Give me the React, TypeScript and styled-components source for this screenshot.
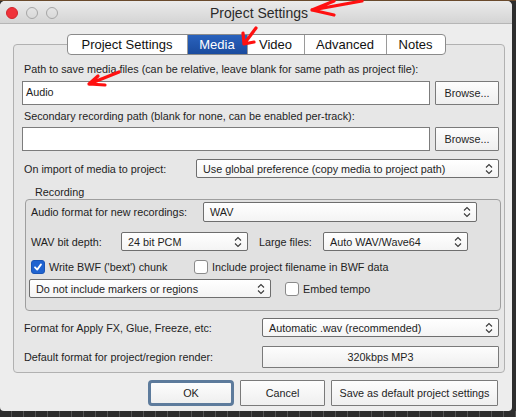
import React from "react";
import styled, { createGlobalStyle } from "styled-components";

const TEXT = "10.8px";

const Global = createGlobalStyle`
  html, body { margin: 0; padding: 0; background: #2c2c2c; }
  body { font-family: "Liberation Sans", Arial, sans-serif; color: #1e1e1e; }
  * { box-sizing: border-box; }
`;

const Desktop = styled.div`
  position: relative;
  width: 516px;
  height: 417px;
  overflow: hidden;
  padding-top: 1px;
  background:
    repeating-linear-gradient(90deg, transparent 0 11px, #555 11px 12px) 0 411px / 100% 6px no-repeat,
    linear-gradient(#6a4a2c 0 1px, #2e2e2e 1px);
`;

const Window = styled.div`
  width: 512px;
  height: 410px;
  background: #ededed;
  border-radius: 5px 5px 4px 4px;
  overflow: hidden;
  display: flex;
  flex-direction: column;
`;

const TitleBar = styled.div`
  flex: none;
  height: 23px;
  display: grid;
  grid-template-columns: 1fr auto 1fr;
  align-items: center;
  background: linear-gradient(#ebebeb, #d4d4d4);
  border-bottom: 1px solid #b6b6b6;
  padding-left: 6px;
`;

const Lights = styled.div`
  display: flex;
  gap: 8px;
  padding-top: 2px;
`;

const Light = styled.span<{ $red?: boolean }>`
  width: 12px;
  height: 12px;
  border-radius: 50%;
  background: ${(p) => (p.$red ? "#f0323a" : "transparent")};
  border: 1px solid ${(p) => (p.$red ? "#d0262d" : "#a6a6a6")};
`;

const Title = styled.div`
  font-size: 14px;
  color: #2a2a2a;
  padding-top: 1px;
`;

const Body = styled.div`
  flex: 1;
  display: flex;
  flex-direction: column;
  padding: 0 7px 0 13px;
`;

const TabsRow = styled.div`
  display: flex;
  justify-content: center;
  margin-top: 10px;
  padding-right: 6px;
  position: relative;
  z-index: 1;
`;

const TabBar = styled.div`
  display: flex;
  height: 21px;
  background: #fff;
  border: 1px solid #8b8b8b;
  border-radius: 4px;
  overflow: hidden;
`;

const Tab = styled.div<{ $active?: boolean; $w: number }>`
  width: ${(p) => p.$w}px;
  display: flex;
  align-items: center;
  justify-content: center;
  font-size: 13px;
  color: ${(p) => (p.$active ? "#fff" : "#111")};
  background: ${(p) => (p.$active ? "linear-gradient(#2a62bd, #1a4b9e)" : "transparent")};
  & + & {
    border-left: 1px solid #9a9a9a;
  }
`;

const Group = styled.div`
  margin-top: -11px;
  border: 1px solid #b1b1b1;
  border-radius: 4px;
  background: #e7e7e7;
  padding: 18px 5px 4px 8px;
  display: flex;
  flex-direction: column;
`;

const Label = styled.div<{ $mt?: number }>`
  font-size: ${TEXT};
  line-height: 13px;
  padding-left: 2px;
  margin-top: ${(p) => p.$mt ?? 0}px;
  white-space: nowrap;
`;

const PathRow = styled.div<{ $mt: number }>`
  display: flex;
  gap: 5px;
  height: 24px;
  margin-top: ${(p) => p.$mt}px;
`;

const TextBox = styled.div`
  flex: 1;
  background: #fff;
  border: 1px solid #7c7c7c;
  font-size: ${TEXT};
  padding: 4px 3px;
`;

const Button = styled.div<{ $w?: number; $focus?: boolean; $h?: number }>`
  width: ${(p) => (p.$w ? `${p.$w}px` : "auto")};
  height: ${(p) => p.$h ?? 24}px;
  flex: ${(p) => (p.$w ? "none" : "1")};
  display: flex;
  align-items: center;
  justify-content: center;
  font-size: ${TEXT};
  color: #1e1e1e;
  background: linear-gradient(#fdfdfd, #efefef);
  border: ${(p) => (p.$focus ? "3px solid #5d7b9c" : "1px solid #7a7a7a")};
  border-radius: ${(p) => (p.$focus ? "4px" : "1px")};
`;

const Row = styled.div<{ $mt?: number; $gap?: number }>`
  display: flex;
  align-items: center;
  gap: ${(p) => p.$gap ?? 0}px;
  margin-top: ${(p) => p.$mt ?? 0}px;
`;

const FieldLabel = styled.div<{ $w?: number; $pl?: number }>`
  font-size: ${TEXT};
  white-space: nowrap;
  padding-left: ${(p) => p.$pl ?? 2}px;
  width: ${(p) => (p.$w ? `${p.$w}px` : "auto")};
  flex: none;
`;

const SelectBox = styled.div<{ $w?: number; $h?: number }>`
  width: ${(p) => (p.$w ? `${p.$w}px` : "auto")};
  flex: ${(p) => (p.$w ? "none" : "1")};
  height: ${(p) => p.$h ?? 19}px;
  display: flex;
  align-items: center;
  justify-content: space-between;
  padding: 0 5px 0 6px;
  font-size: ${TEXT};
  background: linear-gradient(#ffffff, #f4f4f4);
  border: 1px solid #6e6e6e;
  border-radius: 2px;
  white-space: nowrap;
`;

const Legend = styled.div`
  font-size: ${TEXT};
  line-height: 13px;
  margin-top: 8px;
  padding-left: 13px;
`;

const RecBox = styled.div`
  margin: 0 -2px 0 3px;
  border: 1px solid #9e9e9e;
  border-radius: 4px;
  background: #e1e1e1;
  padding: 2px 23px 12px 3px;
  display: flex;
  flex-direction: column;
`;

const Check = styled.span<{ $on?: boolean }>`
  width: 14px;
  height: 14px;
  flex: none;
  border-radius: 3px;
  display: inline-flex;
  align-items: center;
  justify-content: center;
  background: ${(p) => (p.$on ? "#1f63d0" : "#fff")};
  border: 1px solid ${(p) => (p.$on ? "#1a55b5" : "#8a8a8a")};
`;

const CheckItem = styled.div<{ $w?: number; $pl?: number }>`
  display: flex;
  align-items: center;
  gap: 4px;
  font-size: ${TEXT};
  white-space: nowrap;
  padding-left: ${(p) => p.$pl ?? 0}px;
  width: ${(p) => (p.$w ? `${p.$w}px` : "auto")};
`;

const Footer = styled.div`
  display: flex;
  justify-content: flex-end;
  gap: 6px;
  margin-top: 7px;
  padding-right: 7px;
`;

const Overlay = styled.svg`
  position: absolute;
  left: 0;
  top: 0;
  z-index: 5;
  pointer-events: none;
`;

const Chevrons = () => (
  <svg width="8" height="12" viewBox="0 0 8 12" fill="none" stroke="#3a3a3a" strokeWidth="1.1">
    <path d="M1 4.5 L4 1.5 L7 4.5" />
    <path d="M1 7.5 L4 10.5 L7 7.5" />
  </svg>
);

const Tick = () => (
  <svg width="10" height="10" viewBox="0 0 10 10" fill="none" stroke="#fff" strokeWidth="1.8" strokeLinecap="round" strokeLinejoin="round">
    <path d="M2 5.3 L4.2 7.6 L8 2.4" />
  </svg>
);

const Select = ({ children, w, h }: { children: React.ReactNode; w?: number; h?: number }) => (
  <SelectBox $w={w} $h={h}>
    <span>{children}</span>
    <Chevrons />
  </SelectBox>
);

export default function App() {
  return (
    <Desktop>
      <Global />
      <Window>
        <TitleBar>
          <Lights>
            <Light $red />
            <Light />
            <Light />
          </Lights>
          <Title>Project Settings</Title>
          <span />
        </TitleBar>
        <Body>
          <TabsRow>
            <TabBar>
              <Tab $w={119}>Project Settings</Tab>
              <Tab $w={60} $active>Media</Tab>
              <Tab $w={57}>Video</Tab>
              <Tab $w={82}>Advanced</Tab>
              <Tab $w={59}>Notes</Tab>
            </TabBar>
          </TabsRow>
          <Group>
            <Label>Path to save media files (can be relative, leave blank for same path as project file):</Label>
            <PathRow $mt={5}>
              <TextBox>Audio</TextBox>
              <Button $w={64}>Browse...</Button>
            </PathRow>
            <Label $mt={5}>Secondary recording path (blank for none, can be enabled per-track):</Label>
            <PathRow $mt={4}>
              <TextBox />
              <Button $w={64}>Browse...</Button>
            </PathRow>
            <Row $mt={8}>
              <FieldLabel $w={174}>On import of media to project:</FieldLabel>
              <Select>Use global preference (copy media to project path)</Select>
            </Row>
            <Legend>Recording</Legend>
            <RecBox>
              <Row>
                <FieldLabel $w={174}>Audio format for new recordings:</FieldLabel>
                <Select h={20}>WAV</Select>
              </Row>
              <Row $mt={10}>
                <FieldLabel $w={92}>WAV bit depth:</FieldLabel>
                <Select w={127}>24 bit PCM</Select>
                <FieldLabel $w={75} $pl={11}>Large files:</FieldLabel>
                <Select w={145}>Auto WAV/Wave64</Select>
              </Row>
              <Row $mt={9}>
                <CheckItem $w={165} $pl={2}>
                  <Check $on>
                    <Tick />
                  </Check>
                  Write BWF ('bext') chunk
                </CheckItem>
                <CheckItem>
                  <Check />
                  Include project filename in BWF data
                </CheckItem>
              </Row>
              <Row $mt={5} $gap={14}>
                <Select w={242}>Do not include markers or regions</Select>
                <CheckItem>
                  <Check />
                  Embed tempo
                </CheckItem>
              </Row>
            </RecBox>
            <Row $mt={7}>
              <FieldLabel $w={240}>Format for Apply FX, Glue, Freeze, etc:</FieldLabel>
              <Select>Automatic .wav (recommended)</Select>
            </Row>
            <Row $mt={9}>
              <FieldLabel $w={240}>Default format for project/region render:</FieldLabel>
              <Button $h={22}>320kbps MP3</Button>
            </Row>
          </Group>
          <Footer>
            <Button $w={86} $h={26} $focus>OK</Button>
            <Button $w={85} $h={26}>Cancel</Button>
            <Button $w={167} $h={26}>Save as default project settings</Button>
          </Footer>
        </Body>
      </Window>
      <Overlay width="516" height="417" viewBox="0 0 516 417" fill="none" stroke="#ff1010" strokeWidth="3.2" strokeLinecap="round" strokeLinejoin="round">
        <path d="M362 1 L312 10 M312 10 L334 1 M312 10 L334 15" />
        <path d="M256 28 L244 44 M244 44 L243 33 M244 44 L254 42" />
        <path d="M119 72 L89 84 M89 84 L98 76 M89 84 L105 85" />
      </Overlay>
    </Desktop>
  );
}
